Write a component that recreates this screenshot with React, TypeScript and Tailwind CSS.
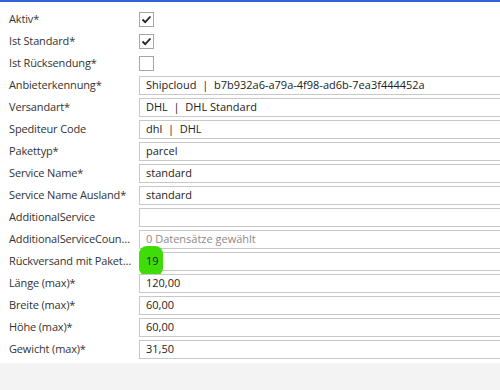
const FONT = "font-['Segoe_UI','Open_Sans','Noto_Sans',sans-serif]"

type Row =
  | { label: string; kind: 'check'; checked: boolean }
  | { label: string; kind: 'text'; value: string; muted?: boolean; marked?: boolean }

const ROWS: Row[] = [
  { label: 'Aktiv*', kind: 'check', checked: true },
  { label: 'Ist Standard*', kind: 'check', checked: true },
  { label: 'Ist Rücksendung*', kind: 'check', checked: false },
  { label: 'Anbieterkennung*', kind: 'text', value: 'Shipcloud  |  b7b932a6-a79a-4f98-ad6b-7ea3f444452a' },
  { label: 'Versandart*', kind: 'text', value: 'DHL  |  DHL Standard' },
  { label: 'Spediteur Code', kind: 'text', value: 'dhl  |  DHL' },
  { label: 'Pakettyp*', kind: 'text', value: 'parcel' },
  { label: 'Service Name*', kind: 'text', value: 'standard' },
  { label: 'Service Name Ausland*', kind: 'text', value: 'standard' },
  { label: 'AdditionalService', kind: 'text', value: '' },
  { label: 'AdditionalServiceCountries', kind: 'text', value: '0 Datensätze gewählt', muted: true },
  { label: 'Rückversand mit Paketmarke', kind: 'text', value: '19', marked: true },
  { label: 'Länge (max)*', kind: 'text', value: '120,00' },
  { label: 'Breite (max)*', kind: 'text', value: '60,00' },
  { label: 'Höhe (max)*', kind: 'text', value: '60,00' },
  { label: 'Gewicht (max)*', kind: 'text', value: '31,50' },
]

function Check({ checked }: { checked: boolean }) {
  return (
    <div className="w-[15px] h-[15px] border border-[#a6a6a6] bg-white flex items-center justify-center">
      {checked && (
        <svg width="11" height="9" viewBox="0 0 11 9">
          <path d="M1.5 4.5 L4.2 7.2 L9.5 1.5" fill="none" stroke="#222" strokeWidth="1.8" />
        </svg>
      )}
    </div>
  )
}

export default function App() {
  return (
    <div className={`${FONT} w-[500px] h-[390px] bg-[#f3f3f3] overflow-hidden text-[11px] text-[#333]`}>
      <div className="bg-white border-t-2 border-[#2f62d6] pt-[6px] pb-[3px]">
        {ROWS.map((r) => (
          <div key={r.label} className="flex items-center h-[22px]">
            <div className="w-[134px] pl-[9px] pr-[1px] truncate leading-[22px] tracking-[-0.15px]">{r.label}</div>
            <div className="ml-[5px] flex-1 min-w-0">
              {r.kind === 'check' ? (
                <Check checked={r.checked} />
              ) : (
                <div className="relative h-[19px] w-[400px] border border-[#c8c8c8] bg-white pl-[6px] flex items-center whitespace-pre">
                  {r.marked && (
                    <div className="absolute left-[-1px] top-[-7px] w-[24px] h-[30px] rounded-[8px] bg-[#3fdc0a]" />
                  )}
                  <span className={`relative ${r.muted ? 'text-[#8a8a8a]' : 'text-[#222]'}`}>{r.value}</span>
                </div>
              )}
            </div>
          </div>
        ))}
      </div>
    </div>
  )
}
